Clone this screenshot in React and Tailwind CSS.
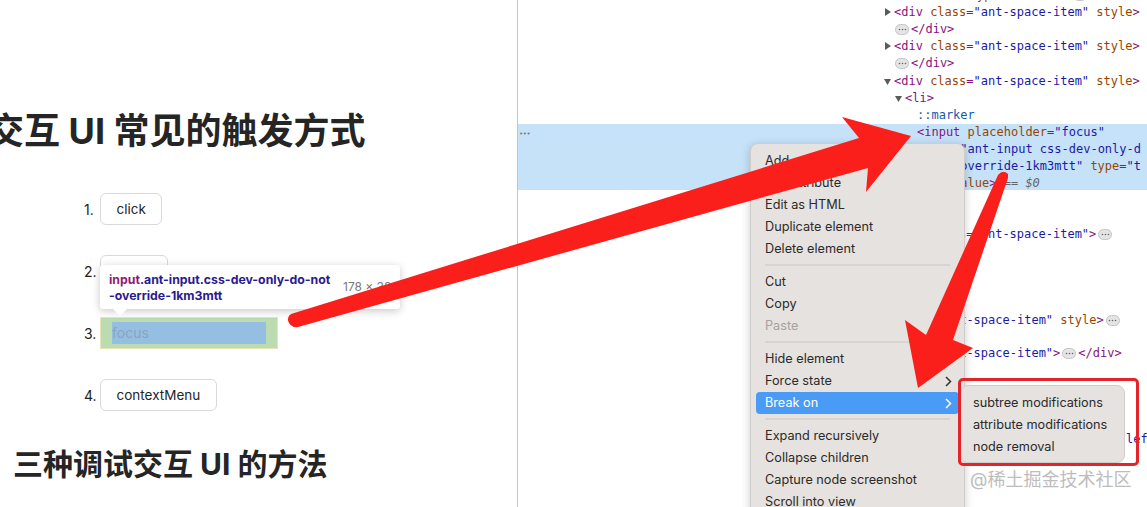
const sans = "font-['Inter','Noto_Sans_CJK_SC',sans-serif]";

function Pill() {
  return (
    <span className="inline-flex items-center justify-center w-[14px] h-[11px] mx-[2px] rounded-[6px] bg-[#e4e4e4] border border-[#c4c4c4] align-middle">
      <svg width="9" height="3" viewBox="0 0 9 3">
        <circle cx="1.5" cy="1.5" r="0.8" fill="#666" />
        <circle cx="4.5" cy="1.5" r="0.8" fill="#666" />
        <circle cx="7.5" cy="1.5" r="0.8" fill="#666" />
      </svg>
    </span>
  );
}

function Caret({ open }) {
  return open ? (
    <svg className="absolute -left-[10px] top-[4px]" width="7" height="7" viewBox="0 0 7 7">
      <path d="M0 1h7L3.5 7z" fill="#5a5a5a" />
    </svg>
  ) : (
    <svg className="absolute -left-[10px] top-[3px]" width="7" height="8" viewBox="0 0 7 8">
      <path d="M1 0l6 4-6 4z" fill="#5a5a5a" />
    </svg>
  );
}

function Tag({ children }) {
  return <span className="text-[#881280]">{children}</span>;
}
function Attr({ children }) {
  return <span className="text-[#994500]">{children}</span>;
}
function Val({ children }) {
  return <span className="text-[#1a1aa6]">{children}</span>;
}

function Row({ pad, children, className = "" }) {
  return (
    <div className={`h-[17.15px] ${className}`} style={{ paddingLeft: pad }}>
      {children}
    </div>
  );
}

function SpaceItem({ caret, open, pad = 894 }) {
  return (
    <Row pad={pad}>
      <span className="relative">
        {caret && <Caret open={open} />}
        <Tag>&lt;div </Tag>
        <Attr>class</Attr>
        <Tag>=</Tag>
        <Val>"ant-space-item"</Val>
        <Attr> style</Attr>
        <Tag>&gt;</Tag>
      </span>
    </Row>
  );
}

function Tree() {
  return (
    <div className="font-['DejaVu_Sans_Mono',monospace] text-[12px] leading-[17.15px] whitespace-nowrap pt-[4px] -ml-[518px]">
      <Row pad={912} className="-mt-[17.15px]">
        <Tag>&lt;button </Tag>
        <Attr>type</Attr>
        <Tag>=</Tag>
        <Val>"button"</Val>
        <Tag>&gt;</Tag>
        <Pill />
      </Row>
      <SpaceItem caret />
      <Row pad={893}>
        <Pill />
        <Tag>&lt;/div&gt;</Tag>
      </Row>
      <SpaceItem caret />
      <Row pad={893}>
        <Pill />
        <Tag>&lt;/div&gt;</Tag>
      </Row>
      <SpaceItem caret open />
      <Row pad={905}>
        <span className="relative">
          <Caret open />
          <Tag>&lt;li&gt;</Tag>
        </span>
      </Row>
      <Row pad={917}>
        <span className="text-[#1558b0]">::marker</span>
      </Row>
      <div className="relative bg-[#c6e2f8] h-[66px]">
        <span className="absolute left-[519px] top-[2px] text-[#777] text-[7px] tracking-[-0.5px]">•••</span>
        <Row pad={917}>
          <Tag>&lt;input </Tag>
          <Attr>placeholder</Attr>
          <Tag>=</Tag>
          <Val>"focus"</Val>
        </Row>
        <Row pad={917}>
          <Attr>class</Attr>
          <Tag>=</Tag>
          <Val>"ant-input css-dev-only-d</Val>
        </Row>
        <Row pad={917}>
          <Val>o-not-override-1km3mtt"</Val>
          <Attr> type</Attr>
          <Tag>=</Tag>
          <Val>"t</Val>
        </Row>
        <Row pad={917}>
          <Attr>ext" value</Attr>
          <Tag>&gt;</Tag>
          <span className="text-[#666]"> == </span>
          <span className="text-[#666] italic">$0</span>
        </Row>
      </div>
      <Row pad={917} className="mt-[19px]">
        <Tag>&lt;/li&gt;</Tag>
      </Row>
      <Row pad={894}>
        <Tag>&lt;div </Tag>
        <Attr>class</Attr>
        <Tag>=</Tag>
        <Val>"ant-space-item"</Val>
        <Tag>&gt;</Tag>
        <Pill />
      </Row>
      <div className="h-[68.5px]" />
      <Row pad={858}>
        <Tag>&lt;div </Tag>
        <Attr>class</Attr>
        <Tag>=</Tag>
        <Val>"ant-space-item"</Val>
        <Attr> style</Attr>
        <Tag>&gt;</Tag>
        <Pill />
      </Row>
      <div className="h-[16px]" />
      <Row pad={858}>
        <Tag>&lt;div </Tag>
        <Attr>class</Attr>
        <Tag>=</Tag>
        <Val>"ant-space-item"</Val>
        <Tag>&gt;</Tag>
        <Pill />
        <Tag>&lt;/div&gt;</Tag>
      </Row>
      <div className="h-[69px]" />
      <Row pad={1126}>
        <Val>left</Val>
      </Row>
    </div>
  );
}

function MenuItem({ children, active, disabled, arrow }) {
  return (
    <div
      className={`flex items-center justify-between h-[22px] pl-[9px] pr-[7px] rounded-[4px] ${
        active ? "bg-[#4a9bf5] text-white" : disabled ? "text-[#a5a29f]" : "text-[#2b2a29]"
      }`}
    >
      <span>{children}</span>
      {arrow && (
        <svg width="7" height="11" viewBox="0 0 7 11" fill="none" stroke={active ? "#fff" : "#333"} strokeWidth="1.5">
          <path d="M1 1l4.5 4.5L1 10" />
        </svg>
      )}
    </div>
  );
}

function Sep() {
  return <div className="h-px bg-[#c9c6c3] my-[5px] mx-[9px] -translate-y-[0.5px]" />;
}

function ContextMenu() {
  return (
    <div
      className={`absolute left-[750px] top-[143px] w-[215px] h-[380px] pt-[6px] px-[5px] bg-[#e6e2df] rounded-[8px] border border-[#cfccc9] shadow-[0_2px_10px_rgba(0,0,0,0.2)] text-[12.7px] leading-[22px] ${sans}`}
    >
      <MenuItem>Add attribute</MenuItem>
      <MenuItem>Edit attribute</MenuItem>
      <MenuItem>Edit as HTML</MenuItem>
      <MenuItem>Duplicate element</MenuItem>
      <MenuItem>Delete element</MenuItem>
      <Sep />
      <MenuItem>Cut</MenuItem>
      <MenuItem>Copy</MenuItem>
      <MenuItem disabled>Paste</MenuItem>
      <Sep />
      <MenuItem>Hide element</MenuItem>
      <MenuItem arrow>Force state</MenuItem>
      <MenuItem active arrow>
        Break on
      </MenuItem>
      <Sep />
      <MenuItem>Expand recursively</MenuItem>
      <MenuItem>Collapse children</MenuItem>
      <MenuItem>Capture node screenshot</MenuItem>
      <MenuItem>Scroll into view</MenuItem>
    </div>
  );
}

function SubMenu() {
  return (
    <>
      <div
        className={`absolute left-[960px] top-[385px] w-[165px] h-[78px] py-[6px] pl-[12px] bg-[#e6e2df] rounded-[8px] border border-[#cfccc9] text-[12.7px] leading-[22px] text-[#2b2a29] ${sans}`}
      >
        <div>subtree modifications</div>
        <div>attribute modifications</div>
        <div>node removal</div>
      </div>
      <div className="absolute left-[958px] top-[378px] w-[181px] h-[88px] border-[3px] border-[#e3242b] rounded-[5px]" />
    </>
  );
}

function Arrows() {
  return (
    <svg className="absolute inset-0 pointer-events-none" width="1147" height="507" viewBox="0 0 1147 507">
      <path
        d="M911 136L842 117L859 138L291 314Q286 317 289 323Q292 328 298 327L868 168L866 192Z"
        fill="#fb1f1b"
      />
      <path
        d="M1008 174Q1003 169 998 175L926 335L905 320L918 388L973 348L953 340L1008 178Z"
        fill="#fb1f1b"
      />
    </svg>
  );
}

function Btn({ children, className = "" }) {
  return (
    <button className={`h-[32px] px-[15.5px] rounded-[6px] border border-[#d9d9d9] bg-white text-[13.5px] text-[#262626] ${className}`}>
      {children}
    </button>
  );
}

function Li({ n, children }) {
  return (
    <li className="flex items-center ml-[84px] text-[14px] text-[#222]">
      <span className="w-[16px]">{n}.</span>
      {children}
    </li>
  );
}

function Inspector() {
  return (
    <div className="relative">
      <div className="w-[178px] h-[32px] bg-[#bbdcb0] border border-[#e8e4b8] pl-[11px] pr-[11px] py-[4px]">
        <div className="h-[22px] bg-[#94bfe2] text-[14px] leading-[22px] text-[#8aa5bd]">focus</div>
      </div>
      <div className="absolute left-0 bottom-[40px] w-[300px] h-[44px] flex bg-white rounded-[3px] shadow-[0_2px_8px_rgba(0,0,0,0.22)] pl-[9px] pt-[7px] text-[12.3px] leading-[16px] font-bold font-['Inter',sans-serif]">
        <div className="w-[234px] text-[#2a1a8e] whitespace-nowrap">
          <div>
            <span className="text-[#8f1a7a]">input</span>.ant-input.css-dev-only-do-not
          </div>
          <div>-override-1km3mtt</div>
        </div>
        <span className="mt-[7px] text-[12px] font-normal text-[#777] whitespace-nowrap">178 × 32</span>
        <span className="absolute left-[12px] -bottom-[7px] w-0 h-0 border-l-[8px] border-r-[8px] border-t-[8px] border-l-transparent border-r-transparent border-t-white" />
      </div>
    </div>
  );
}

export default function App() {
  return (
    <div className={`relative w-[1147px] h-[507px] overflow-hidden flex bg-white ${sans}`}>
      <div className="w-[518px] shrink-0 border-r border-[#c4c4c4] overflow-hidden pt-[108px]">
        <h2 className="-ml-[6px] text-[36px] leading-[46px] font-bold text-[#252525] whitespace-nowrap">
          <span className="-ml-[6px]">交互 UI 常见的触发方式</span>
        </h2>
        <ol className="mt-[39px] flex flex-col gap-[30px]">
          <Li n={1}>
            <Btn>click</Btn>
          </Li>
          <Li n={2}>
            <Btn className="w-[68px]">hover</Btn>
          </Li>
          <Li n={3}>
            <Inspector />
          </Li>
          <Li n={4}>
            <Btn>contextMenu</Btn>
          </Li>
        </ol>
        <h2 className="mt-[33px] ml-[13px] text-[30px] leading-[40px] font-bold text-[#252525] whitespace-nowrap">
          三种调试交互 UI 的方法
        </h2>
      </div>
      <div className="flex-1 min-w-0 overflow-hidden">
        <Tree />
      </div>
      <ContextMenu />
      <SubMenu />
      <div className="absolute left-[970px] top-[468px] text-[18px] leading-[24px] text-[#bdbdbd] whitespace-nowrap">
        @稀土掘金技术社区
      </div>
      <Arrows />
    </div>
  );
}
